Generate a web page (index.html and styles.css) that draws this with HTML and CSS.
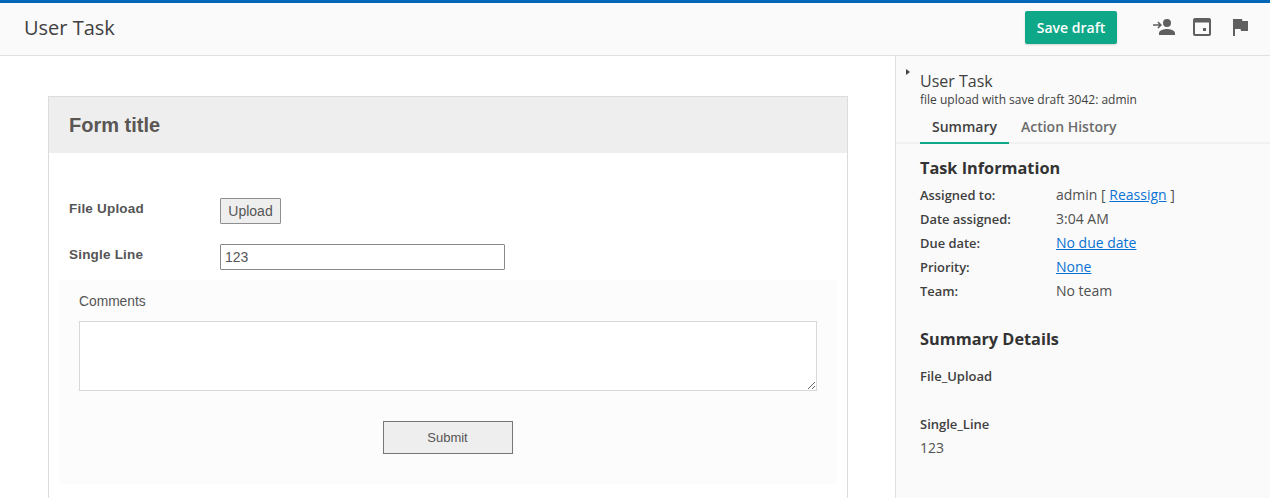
FILE: index.html
```html
<!DOCTYPE html>
<html lang="en">
<head>
<meta charset="utf-8">
<title>User Task</title>
<link rel="stylesheet" href="styles.css">
</head>
<body>
<div class="app">
  <header class="topbar">
    <h1 class="page-title">User Task</h1>
    <button class="save-draft" type="button">Save draft</button>
    <div class="actions">
      <svg class="icon" viewBox="0 0 24 24" width="24" height="24"><path d="M15 12a4 4 0 1 0 0-8 4 4 0 0 0 0 8zm0 2c-2.700 0-8 1.300-8 4v2h16v-2c0-2.700-5.300-4-8-4z"/><path d="M6.500 6.500 5.400 7.600 7 9.200H1v1.600h6l-1.600 1.600 1.100 1.100L10 10z"/></svg>
      <svg class="icon" viewBox="0 0 24 24" width="24" height="24"><path fill-rule="evenodd" d="M5 3h14a2 2 0 0 1 2 2v14a2 2 0 0 1-2 2H5a2 2 0 0 1-2-2V5a2 2 0 0 1 2-2zm0 4.500V19h14V7.500z"/><rect x="13" y="13" width="3" height="3"/></svg>
      <svg class="icon" viewBox="0 0 24 24" width="24" height="24"><path d="M14.400 6 14 4H5v17h2v-7h5.600l.4 2h7V6z"/></svg>
    </div>
  </header>
  <div class="content">
    <main class="form-area">
      <section class="form-card">
        <div class="form-header"><h2 class="form-title">Form title</h2></div>
        <div class="form-body">
          <div class="field field-upload">
            <label class="field-label">File Upload</label>
            <button class="upload-btn" type="button">Upload</button>
          </div>
          <div class="field field-line">
            <label class="field-label">Single Line</label>
            <input class="text-input" type="text" value="123">
          </div>
          <div class="comment-box">
            <div class="comment-label">Comments</div>
            <textarea class="comment-input"></textarea>
            <div class="submit-row"><button class="submit-btn" type="button">Submit</button></div>
          </div>
        </div>
      </section>
    </main>
    <aside class="side">
      <span class="caret"></span>
      <div class="side-head">
        <div class="side-title">User Task</div>
        <div class="side-sub">file upload with save draft 3042: admin</div>
      </div>
      <nav class="tabs">
        <span class="tab tab-active">Summary</span>
        <span class="tab">Action History</span>
      </nav>
      <div class="side-body">
        <h3 class="side-h">Task Information</h3>
        <dl class="info">
          <dt>Assigned to:</dt><dd>admin [ <a href="#">Reassign</a> ]</dd>
          <dt>Date assigned:</dt><dd>3:04 AM</dd>
          <dt>Due date:</dt><dd><a href="#">No due date</a></dd>
          <dt>Priority:</dt><dd><a href="#">None</a></dd>
          <dt>Team:</dt><dd>No team</dd>
        </dl>
        <h3 class="side-h side-h-details">Summary Details</h3>
        <div class="detail-name detail-first">File_Upload</div>
        <div class="detail-name detail-second">Single_Line</div>
        <div class="detail-value">123</div>
      </div>
    </aside>
  </div>
</div>
</body>
</html>
```
FILE: styles.css
```css
* { box-sizing: border-box; }
html, body { margin: 0; height: 100%; overflow: hidden; background: #fff; }
body { font-family: "Open Sans", "Noto Sans", sans-serif; color: #3c3c3c; }
.app { height: 498px; display: flex; flex-direction: column; overflow: hidden; }
.topbar {
  height: 56px; flex: none; display: flex; align-items: center;
  background: #fafafa; border-top: 3px solid #0066b8; border-bottom: 1px solid #e0e0e0;
  padding: 0 18px 4px 24px;
}
.page-title { margin: 0; flex: 1; font-size: 20px; font-weight: 400; color: #404040; }
.save-draft {
  width: 92px; height: 33px; margin-right: 35px; border: 0; border-radius: 2px;
  background: #0ea888; color: #fff; font: 600 14px "Open Sans", sans-serif;
  box-shadow: 0 1px 2px rgba(0,0,0,.15); padding: 0;
}
.actions { display: flex; gap: 14px; }
.icon { fill: #5f5f5f; display: block; }
.content { flex: 1; display: flex; min-height: 0; }
.form-area { width: 895px; flex: none; padding: 40px 0 0 48px; background: #fff; }
.form-card { width: 800px; height: 100%; border: 1px solid #dcdcdc; border-bottom: 0; font-family: "Liberation Sans", Arial, sans-serif; }
.form-header { height: 56px; background: #eee; padding: 0 20px; display: flex; align-items: center; }
.form-title { margin: 0; font-size: 20px; font-weight: 700; color: #5a5654; }
.form-body { padding: 0 10px; }
.field { display: flex; padding-left: 10px; }
.field-upload { padding-top: 45px; height: 91px; }
.field-line { height: 36px; }
.field-label { width: 151px; font-size: 13.500px; font-weight: 700; color: #555; letter-spacing: .2px; line-height: 21px; }
.upload-btn {
  width: 61px; height: 26px; padding: 0; background: #eee; border: 1px solid #8f8f8f; border-radius: 1px;
  font: 14px "Liberation Sans", Arial, sans-serif; color: #555;
}
.text-input {
  width: 285px; height: 26px; border: 1px solid #8a8a8a; border-radius: 1px; padding: 0 4px;
  font: 14px "Liberation Sans", Arial, sans-serif; color: #555;
}
.comment-box { background: #fcfcfc; height: 204px; padding: 13px 20px 0; }
.comment-label { font-size: 13.800px; line-height: 18px; color: #555; margin-bottom: 10px; }
.comment-input { display: block; width: 738px; height: 70px; border: 1px solid #d8d8d8; background: #fff; margin: 0; }
.submit-row { display: flex; justify-content: center; margin-top: 30px; padding-right: 1px; }
.submit-btn { width: 130px; height: 33px; background: #eee; border: 1px solid #777; padding: 0; font: 13px "Liberation Sans", Arial, sans-serif; color: #555; }
.side { flex: 1; position: relative; background: #fafafa; border-left: 1px solid #e0e0e0; min-width: 0; }
.caret { position: absolute; left: 10px; top: 13px; width: 0; height: 0; border-left: 4px solid #444; border-top: 3px solid transparent; border-bottom: 3px solid transparent; }
.side-head { padding: 15px 0 0 24px; }
.side-title { font-size: 16px; line-height: 20px; color: #404040; }
.side-sub { font-size: 12px; line-height: 18px; color: #404040; }
.tabs { display: flex; height: 35px; padding-left: 24px; border-bottom: 2px solid #f1f1f1; }
.tab { font-size: 14px; font-weight: 600; line-height: 20px; padding: 8px 12px 0; color: #6b6b6b; height: 35px; }
.tab-active { color: #404040; border-bottom: 2px solid #0ea888; }
.side-body { padding: 0 0 0 24px; font-size: 14px; color: #505050; }
.side-h { margin: 0; font-size: 16.300px; line-height: 22px; font-weight: 700; color: #333; }
.side-body > .side-h:first-child { margin-top: 13px; }
.info { display: grid; grid-template-columns: 136px 1fr; grid-auto-rows: 24px; margin: 4px 0 0; line-height: 24px; }
.info dt { font-size: 12.900px; font-weight: 600; color: #404040; }
.info dd { margin: 0; }
.info a { color: #0b72d3; }
.side-h-details { margin-top: 25px; }
.detail-name { font-size: 13px; font-weight: 600; line-height: 20px; color: #404040; }
.detail-first { margin-top: 16px; }
.detail-second { margin-top: 28px; }
.detail-value { line-height: 20px; margin-top: 4px; }
```
